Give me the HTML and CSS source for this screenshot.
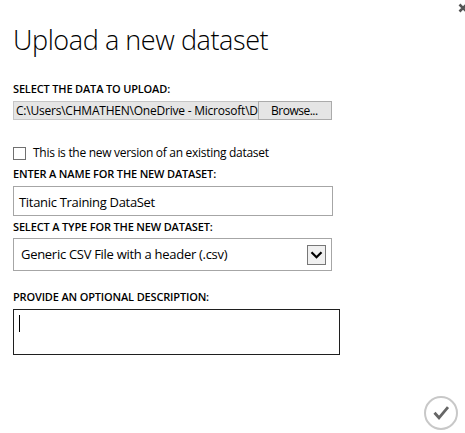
FILE: index.html
```html
<!DOCTYPE html>
<html lang="en">
<head>
<meta charset="utf-8">
<title>Upload a new dataset</title>
<link rel="stylesheet" href="styles.css">
</head>
<body>
<main class="dialog">
  <svg class="close" viewBox="0 0 10 10" aria-label="Close"><path d="M1.5 1.5 8.5 8.5M8.5 1.5 1.5 8.5"/></svg>
  <h1 class="title">Upload a new dataset</h1>
  <form class="form">
    <div class="label label-file">SELECT THE DATA TO UPLOAD:</div>
    <div class="file">
      <div class="file-path"><span>C:\Users\CHMATHEN\OneDrive - Microsoft\D</span></div>
      <div class="browse"><span>Browse...</span></div>
    </div>
    <div class="check"><i class="box"></i><span class="check-text">This is the new version of an existing dataset</span></div>
    <div class="label label-name">ENTER A NAME FOR THE NEW DATASET:</div>
    <div class="name"><span>Titanic Training DataSet</span></div>
    <div class="label label-type">SELECT A TYPE FOR THE NEW DATASET:</div>
    <div class="select">
      <span class="select-text">Generic CSV File with a header (.csv)</span>
      <div class="arrow"><svg viewBox="0 0 17 18"><path d="M3.5 6.2 8.5 11.2 13.5 6.2"/></svg></div>
    </div>
    <div class="label label-desc">PROVIDE AN OPTIONAL DESCRIPTION:</div>
    <div class="description"><i class="caret"></i></div>
  </form>
  <svg class="submit" viewBox="0 0 34 34" aria-label="OK"><circle cx="17" cy="17" r="16"/><path d="M10.5 16.8 15 21.8 24 11.2"/></svg>
</main>
</body>
</html>
```
FILE: styles.css
```css
* { box-sizing: border-box; }
body {
  margin: 0;
  background: #fff;
  color: #000;
  font: 12px/16px "Open Sans", "Noto Sans", sans-serif;
  white-space: nowrap;
}
.dialog { position: relative; width: 465px; height: 433px; overflow: hidden; padding: 20px 13px 0; }
.close { position: absolute; left: 458px; top: 3px; width: 10px; height: 10px; }
.close path { stroke: #555; stroke-width: 2.6; fill: none; }
.title { margin: 0; height: 40px; font-size: 27px; line-height: 39px; font-weight: 300; letter-spacing: -0.42px; }
.form { display: flex; flex-direction: column; align-items: flex-start; padding-top: 21px; }
.label { height: 16px; font-size: 11px; font-weight: 600; letter-spacing: -0.16px; }
.file { display: flex; width: 319px; height: 19px; margin-top: 4px; background: #e5e5e5; line-height: 17px; }
.file-path { width: 245px; border: 1px solid #c6c6c6; border-right: 0; padding-left: 2px; overflow: hidden; letter-spacing: -0.22px; }
.browse { width: 74px; border: 1px solid #ababab; padding-left: 12px; letter-spacing: -0.5px; }
.check { display: flex; align-items: center; height: 16px; margin-top: 25px; }
.box { width: 13px; height: 13px; border: 1px solid #707070; }
.check-text { margin-left: 7px; letter-spacing: -0.29px; }
.label-name { margin-top: 5px; }
.name { width: 320px; height: 30px; margin-top: 4px; border: 1px solid #a6a6a6; padding: 0 5px; font-size: 13px; line-height: 30px; letter-spacing: -0.31px; }
.label-type { margin-top: 3px; }
.select { display: flex; align-items: center; justify-content: space-between; width: 319px; height: 33px; margin-top: 3px; border: 1px solid #a6a6a6; padding: 0 5px 0 7px; }
.select-text { padding-bottom: 2px; font-size: 13px; letter-spacing: -0.29px; }
.arrow { width: 19px; height: 20px; border: 1px solid #777; background: #f0f0f0; }
.arrow svg { display: block; width: 17px; height: 18px; }
.arrow path { fill: none; stroke: #000; stroke-width: 2.2; }
.label-desc { margin-top: 18px; }
.description { width: 327px; height: 46px; margin-top: 4px; padding: 5px; border: 1px solid #1f1f1f; }
.caret { display: block; width: 1px; height: 17px; background: #000; }
.submit { position: absolute; left: 424px; top: 396px; width: 34px; height: 34px; fill: none; }
.submit circle { stroke: #c8c8c8; stroke-width: 2; }
.submit path { stroke: #666; stroke-width: 2.8; }
```
